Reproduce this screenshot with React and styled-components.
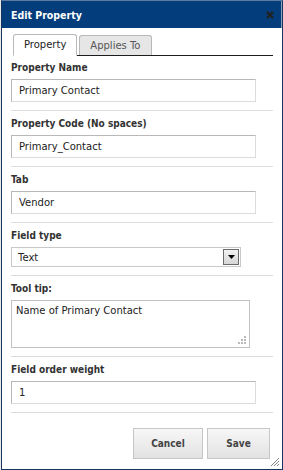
import React from 'react';
import styled, { createGlobalStyle } from 'styled-components';

const Global = createGlobalStyle`
  html, body {
    margin: 0;
    padding: 0;
    background: #e9e9e9;
    font-family: 'DejaVu Sans', Verdana, sans-serif;
  }
`;

const Dialog = styled.div`
  box-sizing: border-box;
  margin-left: 1px;
  width: 282px;
  height: 470px;
  border: 1px solid #17365f;
  border-top-color: #5d7aa0;
  background: #fff;
  display: flex;
  flex-direction: column;
  position: relative;
`;

const TitleBar = styled.div`
  height: 27px;
  background: #033d7c;
  border-right: 1px solid #8aa0bd;
  display: flex;
  align-items: center;
  justify-content: space-between;
  padding: 0 7px 0 9px;
  color: #fff;
  font-family: 'DejaVu Sans Condensed', 'DejaVu Sans', sans-serif;
  font-weight: bold;
  font-size: 10.5px;
`;

const Close = styled.svg`
  width: 8px;
  height: 8px;
`;

const Body = styled.div`
  padding: 6px 9px 0 9px;
  display: flex;
  flex-direction: column;
`;

const TabBar = styled.div`
  display: flex;
  align-items: flex-end;
  gap: 2px;
  margin-left: 2px;
  border-bottom: 1px solid #1d1d1d;
  height: 21px;
`;

const Tab = styled.div`
  box-sizing: border-box;
  height: ${p => (p.$active ? '22px' : '20px')};
  margin-bottom: ${p => (p.$active ? '-1px' : '0')};
  padding: 0 10px;
  border: 1px solid #b9b9b9;
  border-bottom: ${p => (p.$active ? '1px solid #fff' : 'none')};
  border-radius: 3px 3px 0 0;
  background: ${p => (p.$active ? '#fff' : '#e6e6e6')};
  color: ${p => (p.$active ? '#222' : '#555')};
  font-size: 10px;
  display: flex;
  align-items: center;
  padding-bottom: ${p => (p.$active ? '1px' : '0')};
`;

const Group = styled.div`
  padding: ${p => (p.$first ? '5px' : '6px')} 0 8px 0;
  border-bottom: 1px solid #dcdcdc;
  display: flex;
  flex-direction: column;
  align-items: flex-start;
`;

const Label = styled.div`
  font-family: 'DejaVu Sans Condensed', 'DejaVu Sans', sans-serif;
  font-size: 10px;
  font-weight: bold;
  color: #333;
  line-height: 14px;
  margin-bottom: 4px;
`;

const Input = styled.div`
  box-sizing: border-box;
  width: 245px;
  height: 23px;
  border: 1px solid #dcdcdc;
  border-top-color: #b8b8b8;
  border-left-color: #b8b8b8;
  padding-left: 7px;
  display: flex;
  align-items: center;
  font-size: 10px;
  color: #222;
`;

const Select = styled.div`
  box-sizing: border-box;
  width: 230px;
  height: 20px;
  border: 1px solid #c9c9c9;
  display: flex;
  align-items: center;
  justify-content: space-between;
  padding-left: 6px;
  font-size: 10px;
  color: #222;
`;

const Arrow = styled.div`
  box-sizing: border-box;
  width: 16px;
  height: 16px;
  margin-right: 1px;
  border: 1px solid #6b6b6b;
  background: linear-gradient(#f2f2f2, #d6d6d6);
  display: flex;
  align-items: center;
  justify-content: center;
`;

const TextArea = styled.div`
  box-sizing: border-box;
  width: 239px;
  height: 48px;
  border: 1px solid #c2c2c2;
  padding: 4px 4px;
  font-size: 10px;
  color: #222;
  position: relative;
`;

const Grip = styled.svg`
  position: absolute;
  right: 2px;
  bottom: 2px;
  width: 10px;
  height: 10px;
`;

const Footer = styled.div`
  display: flex;
  justify-content: flex-end;
  gap: 4px;
  padding: 15px 3px 0 0;
`;

const Button = styled.div`
  box-sizing: border-box;
  height: 31px;
  width: ${p => p.$w}px;
  border: 1px solid #c6c6c6;
  background: linear-gradient(#f7f7f7, #e2e2e2);
  display: flex;
  align-items: center;
  justify-content: center;
  font-family: 'DejaVu Sans Condensed', 'DejaVu Sans', sans-serif;
  font-size: 10px;
  font-weight: bold;
  color: #444;
`;

const Resize = styled.svg`
  position: absolute;
  right: 2px;
  bottom: 2px;
  width: 10px;
  height: 10px;
`;

export default function App() {
  return (
    <>
      <Global />
      <Dialog>
        <TitleBar>
          <span>Edit Property</span>
          <Close viewBox="0 0 8 8">
            <path d="M1 1 L7 7 M7 1 L1 7" stroke="#222" strokeWidth="2.4" />
          </Close>
        </TitleBar>
        <Body>
          <TabBar>
            <Tab $active>Property</Tab>
            <Tab>Applies To</Tab>
          </TabBar>
          <Group $first>
            <Label>Property Name</Label>
            <Input>Primary Contact</Input>
          </Group>
          <Group>
            <Label>Property Code (No spaces)</Label>
            <Input>Primary_Contact</Input>
          </Group>
          <Group>
            <Label>Tab</Label>
            <Input>Vendor</Input>
          </Group>
          <Group>
            <Label>Field type</Label>
            <Select>
              Text
              <Arrow>
                <svg width="7" height="4" viewBox="0 0 7 4">
                  <path d="M0 0 H7 L3.5 4 Z" fill="#000" />
                </svg>
              </Arrow>
            </Select>
          </Group>
          <Group>
            <Label>Tool tip:</Label>
            <TextArea>
              Name of Primary Contact
              <Grip viewBox="0 0 10 10">
                <rect x="7" y="1" width="2" height="2" fill="#bbb" />
                <rect x="4" y="4" width="2" height="2" fill="#bbb" />
                <rect x="7" y="4" width="2" height="2" fill="#bbb" />
                <rect x="1" y="7" width="2" height="2" fill="#bbb" />
                <rect x="4" y="7" width="2" height="2" fill="#bbb" />
                <rect x="7" y="7" width="2" height="2" fill="#bbb" />
              </Grip>
            </TextArea>
          </Group>
          <Group>
            <Label>Field order weight</Label>
            <Input>1</Input>
          </Group>
          <Footer>
            <Button $w={70}>Cancel</Button>
            <Button $w={63}>Save</Button>
          </Footer>
        </Body>
        <Resize viewBox="0 0 10 10">
          <path d="M9 1 L1 9 M9 4 L4 9 M9 7 L7 9" stroke="#888" strokeWidth="1" />
        </Resize>
      </Dialog>
    </>
  );
}
